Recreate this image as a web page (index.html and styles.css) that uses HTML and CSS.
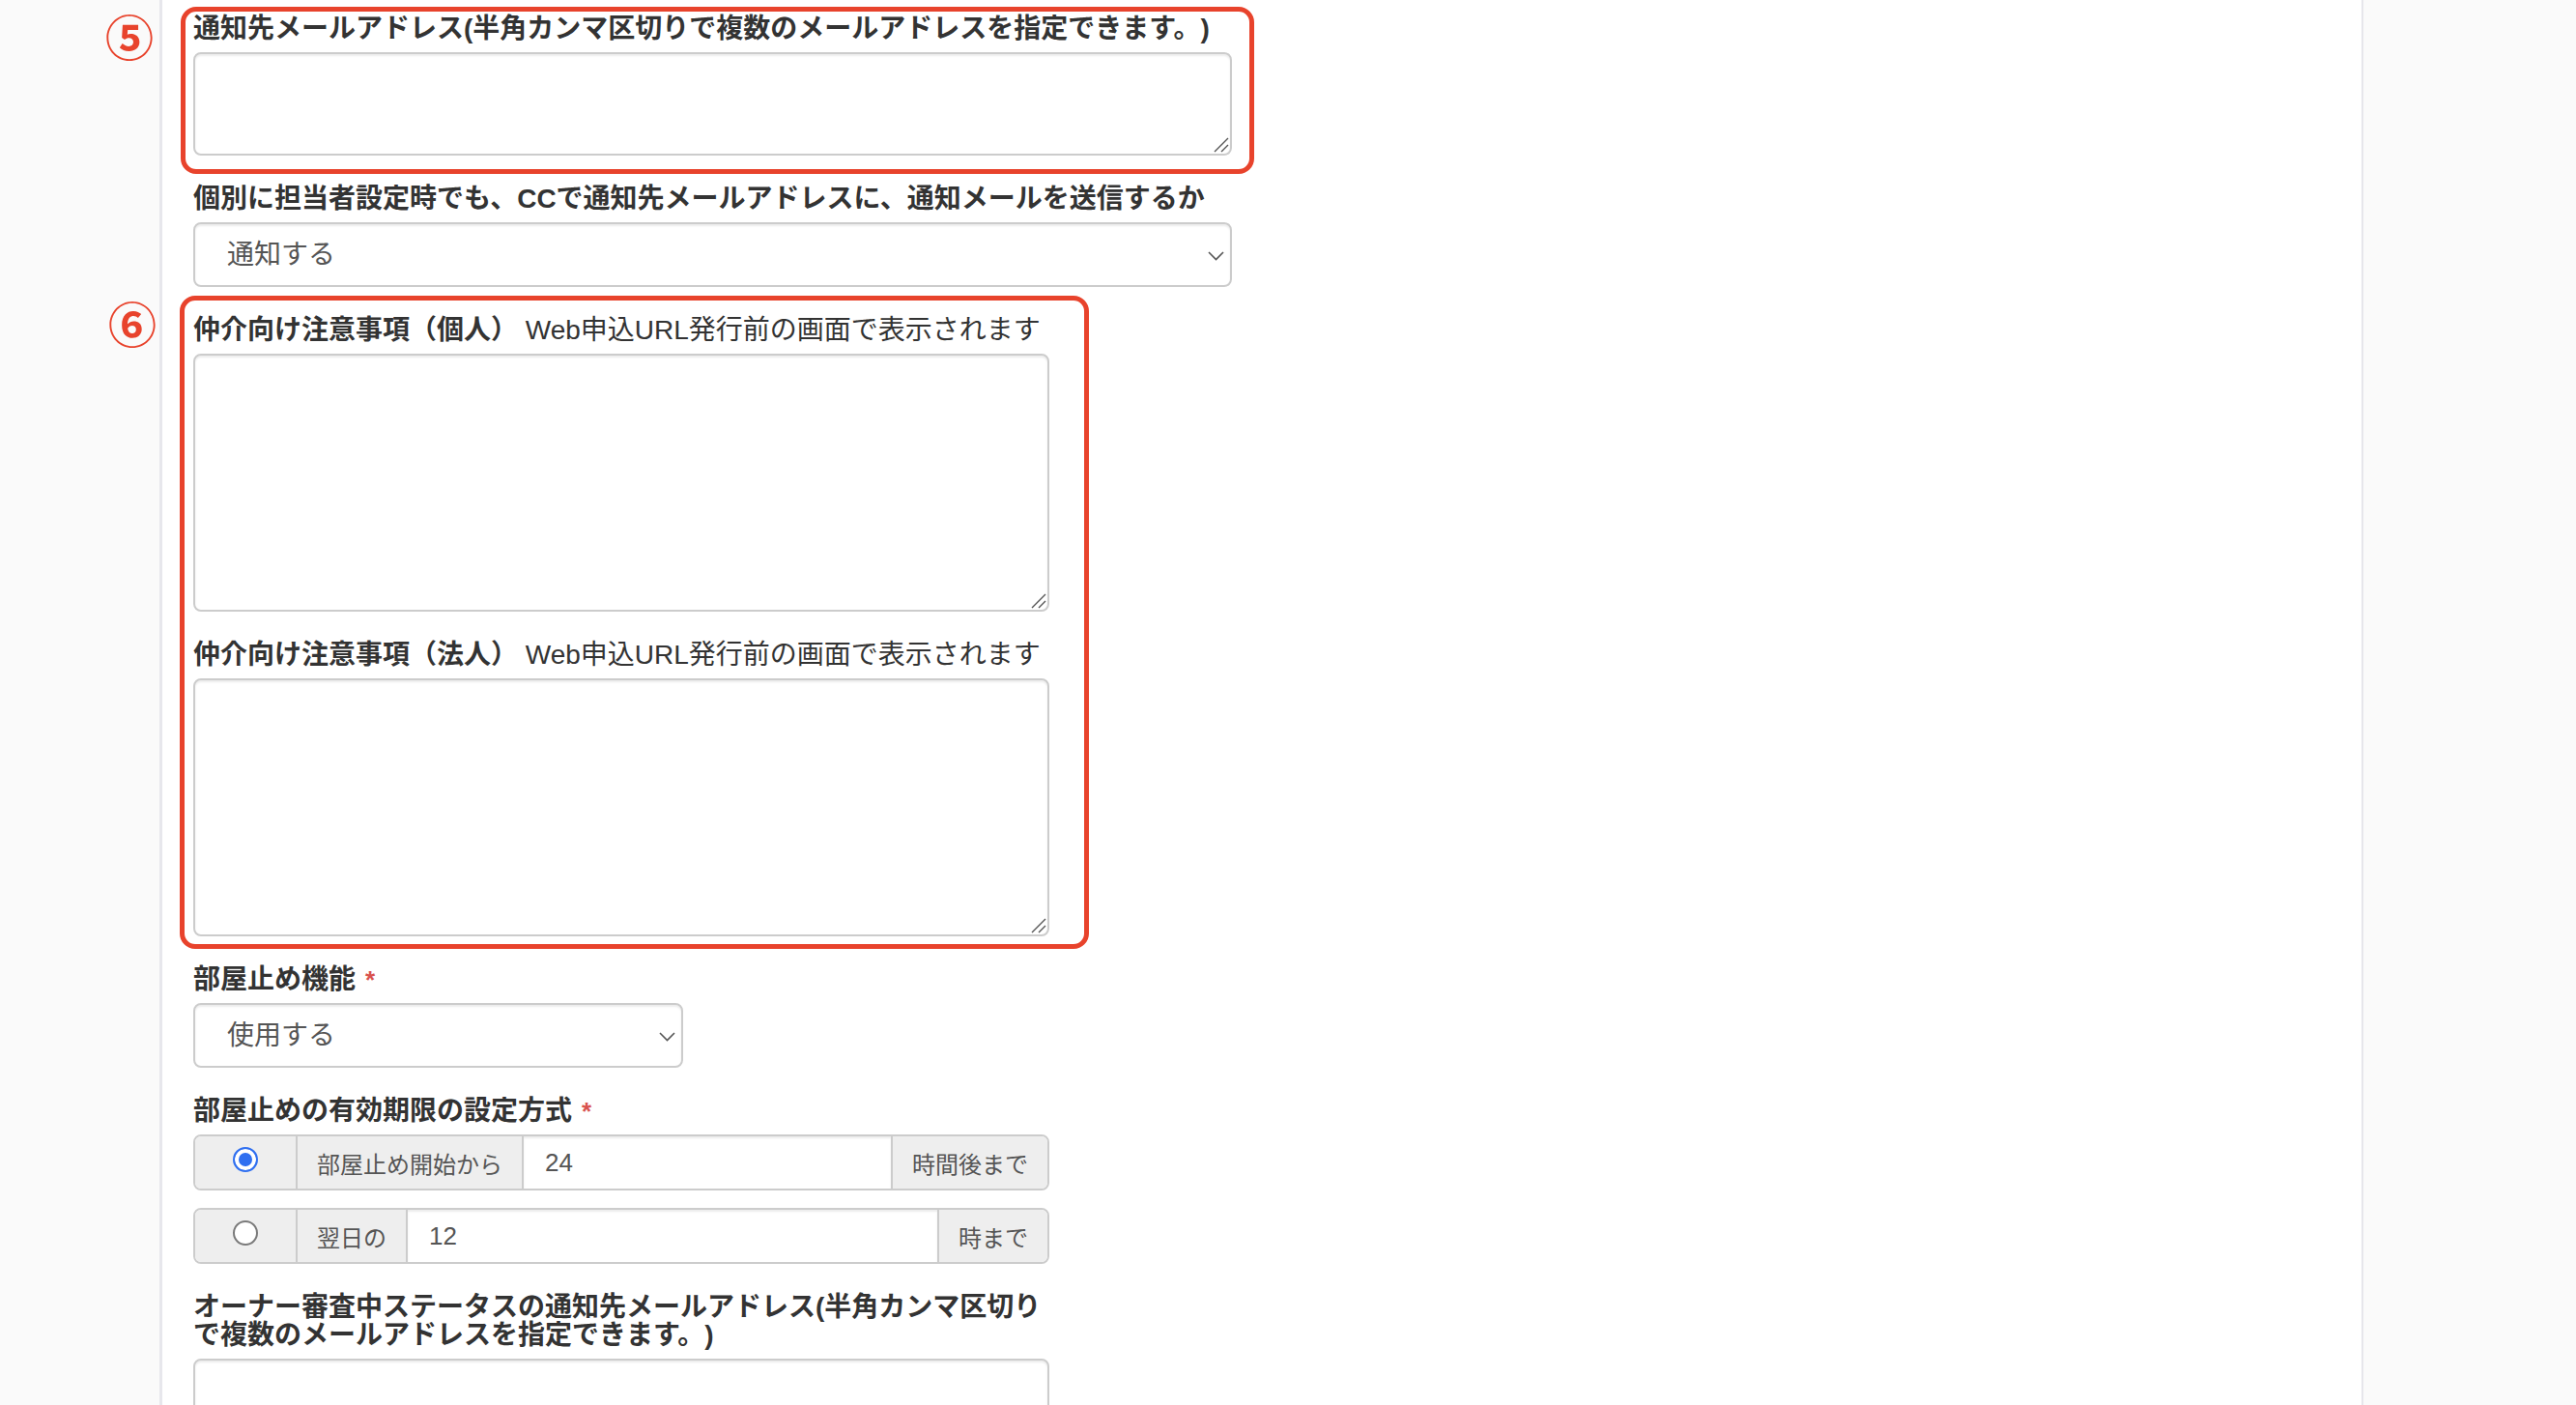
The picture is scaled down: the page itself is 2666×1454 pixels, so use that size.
FILE: index.html
```html
<!DOCTYPE html>
<html lang="ja">
<head>
    <meta charset="UTF-8">
    <meta name="viewport" content="width=device-width, initial-scale=1.0">
    <title>申込設定</title>
    <link rel="stylesheet" href="styles.css">
</head>
<body>
    <div class="layout">
        <aside class="side-nav"></aside>

        <main class="content">
            <form class="settings-form">
                <div class="marked mark-mail">
                    <span class="mark-no">⑤</span>
                    <div class="mark-frame"></div>
                    <div class="form-group wide">
                        <label class="field-label">通知先メールアドレス(半角カンマ区切りで複数のメールアドレスを指定できます。)</label>
                        <div class="area-wrap">
                            <textarea class="form-control area-sm"></textarea>
                            <svg class="grip" width="16" height="16" viewBox="0 0 16 16"><path d="M1 15 L15 1 M8 15 L15 8" stroke="#555" stroke-width="1.4" fill="none"/></svg>
                        </div>
                    </div>
                </div>

                <div class="form-group wide">
                    <label class="field-label">個別に担当者設定時でも、CCで通知先メールアドレスに、通知メールを送信するか</label>
                    <div class="select-wrap">
                        <select class="form-control">
                            <option>通知する</option>
                            <option>通知しない</option>
                        </select>
                        <svg class="chevron" width="17" height="10" viewBox="0 0 17 10"><polyline points="1,1 8.5,8.5 16,1" fill="none" stroke="#555" stroke-width="1.6"/></svg>
                    </div>
                </div>

                <div class="marked mark-notes">
                    <span class="mark-no">⑥</span>
                    <div class="mark-frame"></div>
                    <div class="form-group mid">
                        <label class="field-label">仲介向け注意事項（個人） <span class="hint">Web申込URL発行前の画面で表示されます</span></label>
                        <div class="area-wrap">
                            <textarea class="form-control area-lg"></textarea>
                            <svg class="grip" width="16" height="16" viewBox="0 0 16 16"><path d="M1 15 L15 1 M8 15 L15 8" stroke="#555" stroke-width="1.4" fill="none"/></svg>
                        </div>
                    </div>
                    <div class="form-group mid">
                        <label class="field-label">仲介向け注意事項（法人） <span class="hint">Web申込URL発行前の画面で表示されます</span></label>
                        <div class="area-wrap">
                            <textarea class="form-control area-lg"></textarea>
                            <svg class="grip" width="16" height="16" viewBox="0 0 16 16"><path d="M1 15 L15 1 M8 15 L15 8" stroke="#555" stroke-width="1.4" fill="none"/></svg>
                        </div>
                    </div>
                </div>

                <div class="form-group short">
                    <label class="field-label">部屋止め機能<span class="required">*</span></label>
                    <div class="select-wrap">
                        <select class="form-control">
                            <option>使用する</option>
                            <option>使用しない</option>
                        </select>
                        <svg class="chevron" width="17" height="10" viewBox="0 0 17 10"><polyline points="1,1 8.5,8.5 16,1" fill="none" stroke="#555" stroke-width="1.6"/></svg>
                    </div>
                </div>

                <div class="form-group mid">
                    <label class="field-label">部屋止めの有効期限の設定方式<span class="required">*</span></label>
                    <div class="input-group">
                        <span class="addon radio-cell"><input type="radio" name="hold_limit" checked></span>
                        <span class="addon lead">部屋止め開始から</span>
                        <input type="text" value="24">
                        <span class="addon trail">時間後まで</span>
                    </div>
                    <div class="input-group">
                        <span class="addon radio-cell"><input type="radio" name="hold_limit"></span>
                        <span class="addon lead">翌日の</span>
                        <input type="text" value="12">
                        <span class="addon trail">時まで</span>
                    </div>
                </div>

                <div class="form-group mid">
                    <label class="field-label">オーナー審査中ステータスの通知先メールアドレス(半角カンマ区切りで複数のメールアドレスを指定できます。)</label>
                    <div class="area-wrap">
                        <textarea class="form-control area-sm"></textarea>
                    </div>
                </div>
            </form>
        </main>

        <aside class="side-panel"></aside>
    </div>
</body>
</html>
```

FILE: styles.css
```css
* {
    box-sizing: border-box;
}
body {
    margin: 0;
    font-family: "Liberation Sans", "Noto Sans CJK JP", sans-serif;
    font-size: 28px;
    color: #333;
    background-color: #fff;
    height: 100vh;
    overflow: hidden;
    text-spacing-trim: space-all;
}
.layout {
    display: flex;
    height: 100%;
}
.side-nav {
    width: 168px;
    flex: none;
    background-color: #fafafa;
    border-right: 3px solid #e7e7ec;
}
.side-panel {
    width: 222px;
    flex: none;
    background-color: #fafafa;
    border-left: 2px solid #e6e6eb;
}
.content {
    flex: 1;
    padding: 15px 32px 0;
    background-color: #fff;
}

/* form groups */
.form-group {
    margin-bottom: 30px;
}
.form-group.wide {
    width: 1075px;
}
.form-group.mid {
    width: 886px;
}
.form-group.short {
    width: 507px;
}
.field-label {
    display: block;
    font-weight: 700;
    font-size: 28px;
    line-height: 29px;
    color: #333;
    margin-bottom: 10px;
}
.field-label .hint {
    font-weight: 400;
}
.required {
    color: #d9534f;
    margin-left: 10px;
    font-size: 26px;
    line-height: 0;
}
.form-control {
    display: block;
    width: 100%;
    font-family: inherit;
    font-size: 28px;
    color: #555;
    background-color: #fff;
    border: 2px solid #ccc;
    border-radius: 8px;
    box-shadow: inset 0 2px 2px rgba(0, 0, 0, 0.075);
    margin: 0;
}
.area-wrap {
    position: relative;
}
textarea.form-control {
    padding: 12px 24px;
    resize: none;
}
.area-sm {
    height: 107px;
}
.area-lg {
    height: 267px;
}
.grip {
    position: absolute;
    right: 3px;
    bottom: 3px;
    pointer-events: none;
}

/* selects */
.select-wrap {
    position: relative;
}
.select-wrap select {
    height: 67px;
    padding: 0 48px 0 33px;
    appearance: none;
    -webkit-appearance: none;
}
.chevron {
    position: absolute;
    right: 8px;
    top: 50%;
    margin-top: -4px;
    pointer-events: none;
}

/* input groups with addons */
.input-group {
    display: flex;
    height: 58px;
    border: 2px solid #ccc;
    border-radius: 8px;
    overflow: hidden;
    margin-bottom: 18px;
}
.input-group:last-child {
    margin-bottom: 0;
}
.addon {
    display: flex;
    align-items: center;
    flex: none;
    padding: 0 20px;
    background-color: #eee;
    color: #555;
    font-size: 24px;
    white-space: nowrap;
}
.addon.lead {
    border-right: 2px solid #ccc;
}
.addon.trail {
    border-left: 2px solid #ccc;
}
.radio-cell {
    width: 106px;
    padding: 0;
    justify-content: center;
    border-right: 2px solid #ccc;
}
.input-group input[type="text"] {
    flex: 1;
    min-width: 0;
    border: 0;
    margin: 0;
    padding: 0 22px;
    font-family: inherit;
    font-size: 26px;
    color: #555;
    background-color: #fff;
    box-shadow: inset 0 2px 2px rgba(0, 0, 0, 0.075);
    outline: none;
}
input[type="radio"] {
    appearance: none;
    -webkit-appearance: none;
    width: 26px;
    height: 26px;
    margin: 0 0 6px;
    border-radius: 50%;
    border: 2px solid #7a7a7a;
    background-color: #fff;
}
input[type="radio"]:checked {
    border: 2px solid #2f6ff0;
    background-color: #2f6ff0;
    box-shadow: inset 0 0 0 4px #fff;
}

/* red callout frames with circled numbers */
.marked {
    position: relative;
    margin-bottom: 30px;
}
.marked .form-group:last-of-type {
    margin-bottom: 0;
}
.mark-frame {
    position: absolute;
    border: 5px solid #e8432c;
    border-radius: 16px;
    pointer-events: none;
}
.mark-mail .mark-frame {
    top: -8px;
    left: -13px;
    width: 1111px;
    height: 173px;
}
.mark-notes .mark-frame {
    top: -21px;
    left: -14px;
    width: 941px;
    height: 676px;
}
.mark-no {
    position: absolute;
    width: 50px;
    height: 50px;
    display: flex;
    align-items: center;
    justify-content: center;
    font-family: "Noto Sans CJK JP", sans-serif;
    font-size: 50px;
    font-weight: 700;
    line-height: 1;
    color: #e8432c;
}
.mark-mail .mark-no {
    left: -91px;
    top: -4px;
}
.mark-notes .mark-no {
    left: -88px;
    top: -19px;
}
```
